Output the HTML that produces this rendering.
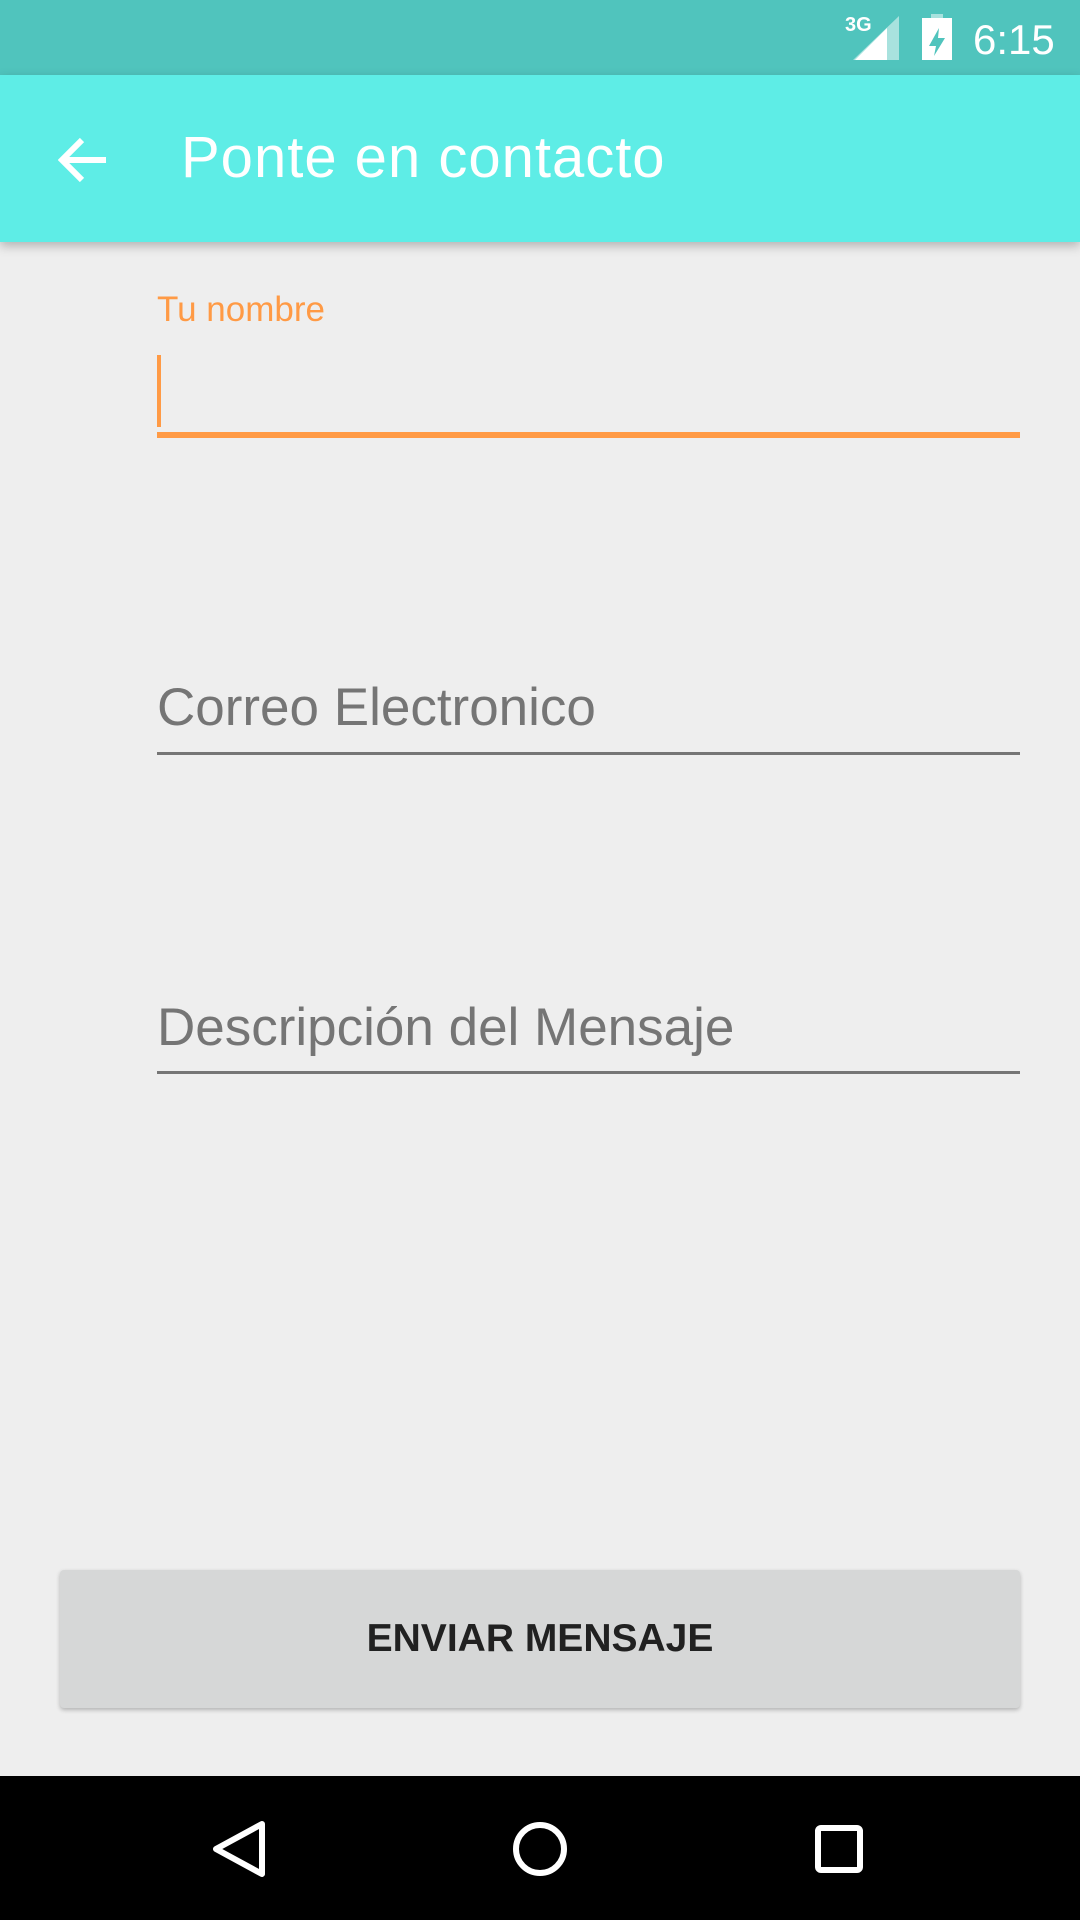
<!DOCTYPE html>
<html><head><meta charset="utf-8"><style>
body{margin:0;width:1080px;height:1920px;background:#eeeeee;font-family:"Liberation Sans",sans-serif;position:relative;overflow:hidden}
.abs{position:absolute}
</style></head><body>
<div class="abs" style="left:0;top:0;width:1080px;height:75px;background:#50c4bd"></div>
<div class="abs" style="left:845px;top:14px;font-size:20px;font-weight:bold;color:#fff">3G</div>
<svg class="abs" style="left:853px;top:16px" width="46" height="44"><polygon points="46,0 46,44 0,44" fill="#fff" opacity="0.5"/><polygon points="34,12 34,44 2,44" fill="#fff"/></svg>
<svg class="abs" style="left:922px;top:14px" width="30" height="46"><rect x="9" y="0" width="12" height="5" fill="#fff" opacity="0.5"/><rect x="0" y="4" width="30" height="42" fill="#fff"/><rect x="0" y="4" width="30" height="12" fill="#fff" opacity="0.5"/><polygon points="17,14 7,32 14,32 12,42 23,24 16,24" fill="#50c4bd"/></svg>
<div class="abs" style="left:973px;top:16px;font-size:42px;color:#fff">6:15</div>
<div class="abs" style="left:0;top:75px;width:1080px;height:167px;background:#5eede6;box-shadow:0 4px 10px rgba(0,0,0,0.25)"></div>
<svg class="abs" style="left:58px;top:136px" width="52" height="48"><path d="M4 24H48M24 4L4 24L24 44" stroke="#fff" stroke-width="6" fill="none"/></svg>
<div class="abs" style="left:181px;top:124px;font-size:58px;color:#fff;letter-spacing:1px">Ponte en contacto</div>
<div class="abs" style="left:157px;top:290px;font-size:35px;color:#ff9a45">Tu nombre</div>
<div class="abs" style="left:157px;top:355px;width:4px;height:72px;background:#ff9a45"></div>
<div class="abs" style="left:157px;top:432px;width:863px;height:6px;background:#ff9a45"></div>
<div class="abs" style="left:157px;top:677px;font-size:53px;color:#757575">Correo Electronico</div>
<div class="abs" style="left:157px;top:752px;width:863px;height:3px;background:#757575"></div>
<div class="abs" style="left:157px;top:997px;font-size:53px;color:#757575">Descripción del Mensaje</div>
<div class="abs" style="left:157px;top:1071px;width:863px;height:3px;background:#757575"></div>
<div class="abs" style="left:60px;top:1570px;width:960px;height:138px;background:#d6d7d7;border-radius:4px;box-shadow:0 2px 4px rgba(0,0,0,0.25);text-align:center;line-height:138px;font-size:39px;font-weight:bold;color:#212121">ENVIAR MENSAJE</div>
<div class="abs" style="left:0;top:1776px;width:1080px;height:144px;background:#000"></div>
<svg class="abs" style="left:0;top:1776px" width="1080" height="144"><path d="M262 48L216 73L262 98Z" stroke="#fff" stroke-width="6" fill="none" stroke-linejoin="round"/><circle cx="540" cy="73" r="24" stroke="#fff" stroke-width="6" fill="none"/><rect x="818" y="52" width="42" height="42" rx="3" stroke="#fff" stroke-width="6" fill="none"/></svg>
</body></html>
